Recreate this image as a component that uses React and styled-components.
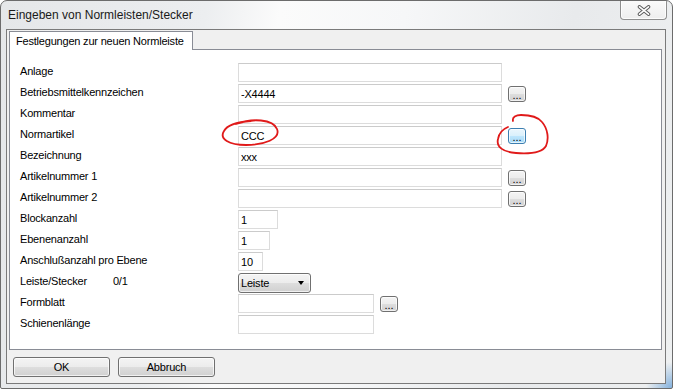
import React from "react";
import styled, { createGlobalStyle, css } from "styled-components";

const GlobalStyle = createGlobalStyle`
  html, body {
    margin: 0;
    padding: 0;
    background: #ffffff;
  }
  body {
    font-family: "Liberation Sans", Arial, sans-serif;
  }
`;

const fields = [
  { label: "Anlage", width: 264 },
  { label: "Betriebsmittelkennzeichen", value: "-X4444", width: 264, browse: true },
  { label: "Kommentar", width: 264 },
  { label: "Normartikel", value: "CCC", width: 264, browse: "active" },
  { label: "Bezeichnung", value: "xxx", width: 264 },
  { label: "Artikelnummer 1", width: 264, browse: true },
  { label: "Artikelnummer 2", width: 264, browse: true },
  { label: "Blockanzahl", value: "1", width: 40 },
  { label: "Ebenenanzahl", value: "1", width: 32 },
  { label: "Anschlußanzahl pro Ebene", value: "10", width: 25 },
  { label: "Leiste/Stecker", hint: "0/1", select: "Leiste" },
  { label: "Formblatt", width: 136, browse: true },
  { label: "Schienenlänge", width: 136 },
];

const uiFont = css`
  font-family: "Liberation Sans", Arial, sans-serif;
  font-size: 11px;
  letter-spacing: -0.2px;
  color: #000;
`;

const buttonFace = css`
  box-sizing: border-box;
  border: 1px solid #707070;
  border-radius: 3px;
  background: linear-gradient(#f4f4f4 0%, #ececec 50%, #dedede 50%, #d0d0d0 100%);
  box-shadow: inset 0 0 0 1px rgba(255, 255, 255, 0.7);
`;

const Window = styled.div`
  position: relative;
  box-sizing: border-box;
  width: 673px;
  height: 389px;
  display: flex;
  flex-direction: column;
  padding: 0 6px 4px 5px;
  border: 1px solid #6c6c6c;
  border-radius: 7px 7px 2px 2px;
  overflow: hidden;
  background:
    radial-gradient(circle at 100% 100%, rgba(96, 156, 214, 0.75), rgba(96, 156, 214, 0) 26px),
    linear-gradient(100deg, #e5e7e9 0%, #eceef0 28%, #fbfbfb 38%, #f6f7f8 55%, #e8eaec 78%, #eef0f1 100%);
`;

const TitleBar = styled.div`
  height: 28px;
  flex: none;
  display: flex;
  align-items: center;
  justify-content: space-between;
`;

const Title = styled.span`
  padding-left: 2px;
  font-family: "Liberation Sans", Arial, sans-serif;
  font-size: 12px;
  color: #1a1a1a;
`;

const CloseButton = styled.div`
  align-self: flex-start;
  box-sizing: border-box;
  width: 47px;
  height: 20px;
  margin: -1px -1px 0 0;
  display: flex;
  align-items: center;
  justify-content: center;
  padding-top: 1px;
  border: 1px solid #8f8f8f;
  border-top: none;
  border-radius: 0 0 4px 4px;
  background: linear-gradient(#fbfbfb, #eeeeee);
  box-shadow: inset 0 0 0 1px rgba(255, 255, 255, 0.8);
`;

const Client = styled.div`
  flex: 1;
  display: flex;
  flex-direction: column;
  padding: 1px 3px 5px 2px;
  border: 1px solid #7a7a7a;
  background: #f0f0f0;
`;

const TabStrip = styled.div`
  height: 19px;
  display: flex;
`;

const Tab = styled.div`
  position: relative;
  z-index: 1;
  box-sizing: border-box;
  width: 184px;
  height: 19px;
  padding-left: 6px;
  border: 1px solid #898c95;
  border-bottom: none;
  background: #ffffff;
  line-height: 18px;
  ${uiFont}
`;

const Panel = styled.div`
  box-sizing: border-box;
  height: 301px;
  margin-top: -1px;
  padding: 13px 10px 0 10px;
  border: 1px solid #898c95;
  background: #ffffff;
`;

const Form = styled.div`
  display: grid;
  grid-template-columns: 218px 1fr;
  grid-auto-rows: 21px;
`;

const Label = styled.div`
  line-height: 16px;
  white-space: nowrap;
  ${uiFont}
`;

const Hint = styled.span`
  margin-left: 26px;
`;

const Field = styled.div`
  height: 19px;
  display: flex;
  align-items: center;
  gap: 6px;
`;

const TextBox = styled.input`
  box-sizing: border-box;
  width: ${(p) => p.$width}px;
  height: 19px;
  margin: 0;
  padding: 0 2px;
  border: 1px solid #dcdcdc;
  border-top-color: #cbcbcb;
  background: #ffffff;
  outline: none;
  ${uiFont}
`;

const BrowseButton = styled.button`
  ${buttonFace}
  width: 18px;
  height: 16px;
  margin: 0;
  padding: 0;
  display: flex;
  align-items: flex-end;
  justify-content: center;
  line-height: 11px;
  ${uiFont}
  letter-spacing: 0;
  ${(p) =>
    p.$active &&
    css`
      border-color: #3c7fb1;
      background: linear-gradient(#eaf6fd 0%, #d9f0fc 50%, #bee6fd 50%, #a7d9f5 100%);
    `}
`;

const Select = styled.div`
  ${buttonFace}
  width: 73px;
  height: 20px;
  display: flex;
  align-items: center;
  justify-content: space-between;
  padding: 0 6px 0 2px;
  ${uiFont}
`;

const Arrow = styled.span`
  width: 0;
  height: 0;
  border-left: 3.5px solid transparent;
  border-right: 3.5px solid transparent;
  border-top: 4px solid #000;
  margin-top: 1px;
`;

const Footer = styled.div`
  display: flex;
  gap: 8px;
  margin-top: 7px;
  padding-left: 4px;
`;

const DialogButton = styled.button`
  ${buttonFace}
  width: 97px;
  height: 20px;
  margin: 0;
  padding: 0;
  ${uiFont}
`;

const Annotations = styled.svg`
  position: absolute;
  top: -1px;
  left: -1px;
  pointer-events: none;
`;

const CloseGlyph = () => (
  <svg width="14" height="11" viewBox="0 0 14 11">
    <path d="M2.5 1.8 L11.5 9.2 M11.5 1.8 L2.5 9.2" stroke="#5f5f5f" strokeWidth="3.6" strokeLinecap="round" fill="none" />
    <path d="M2.5 1.8 L11.5 9.2 M11.5 1.8 L2.5 9.2" stroke="#ffffff" strokeWidth="1.6" strokeLinecap="round" fill="none" />
  </svg>
);

const FormRow = ({ field }) => (
  <>
    <Label>
      {field.label}
      {field.hint && <Hint>{field.hint}</Hint>}
    </Label>
    <Field>
      {field.select ? (
        <Select>
          {field.select}
          <Arrow />
        </Select>
      ) : (
        <TextBox $width={field.width} defaultValue={field.value || ""} readOnly />
      )}
      {field.browse && <BrowseButton $active={field.browse === "active"}>...</BrowseButton>}
    </Field>
  </>
);

export default function App() {
  return (
    <>
      <GlobalStyle />
      <Window>
        <TitleBar>
          <Title>Eingeben von Normleisten/Stecker</Title>
          <CloseButton>
            <CloseGlyph />
          </CloseButton>
        </TitleBar>
        <Client>
          <TabStrip>
            <Tab>Festlegungen zur neuen Normleiste</Tab>
          </TabStrip>
          <Panel>
            <Form>
              {fields.map((f) => (
                <FormRow key={f.label} field={f} />
              ))}
            </Form>
          </Panel>
          <Footer>
            <DialogButton>OK</DialogButton>
            <DialogButton>Abbruch</DialogButton>
          </Footer>
        </Client>
        {/* hand-drawn red marks from the screenshot */}
        <Annotations width="673" height="389" viewBox="0 0 673 389">
          <path
            d="M236 124 C252 118, 273 119, 277 129 C281 139, 264 145, 246 145 C229 145, 219 139, 224 131 C227 125, 237 122, 251 121"
            stroke="#e01a1a"
            strokeWidth="1.8"
            fill="none"
            strokeLinecap="round"
          />
          <path
            d="M513 121 C512 117, 516 115, 521 115 C530 115, 538 117, 542 122 C548 129, 549 139, 546 146 C542 153, 530 154, 516 153 C503 152, 496 147, 498 139 C499 133, 503 129, 508 127"
            stroke="#e01a1a"
            strokeWidth="1.8"
            fill="none"
            strokeLinecap="round"
          />
        </Annotations>
      </Window>
    </>
  );
}
